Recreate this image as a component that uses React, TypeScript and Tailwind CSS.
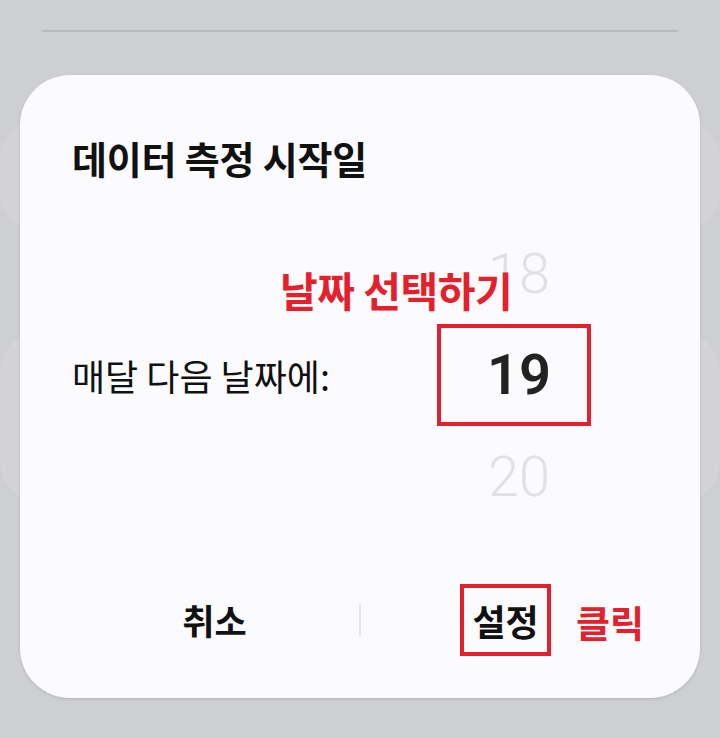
import React, { useState } from 'react';

const DAYS = [18, 19, 20];

export default function App() {
  const [day] = useState(19);

  return (
    <div className="relative h-[738px] w-full overflow-hidden bg-[#cecfd1] font-['Noto_Sans_CJK_KR',sans-serif]">
      {/* dimmed settings page behind the dialog */}
      <div className="mx-[42px] mt-[30px] h-[2px] bg-[#b8b9bb]" />
      <div className="mt-[88px] flex flex-col gap-[100px]">
        <div className="h-[112px] rounded-[40px] bg-[#d3d3d5]" />
        <div className="h-[170px] rounded-[40px] bg-[#d3d3d5]" />
      </div>

      {/* date picker dialog */}
      <div className="absolute left-[20px] top-[75px] flex h-[623px] w-[680px] flex-col rounded-[50px] bg-[#fbfbfd] shadow-[0_1px_3px_rgba(0,0,0,0.12)]">
        <h2 className="pl-[52px] pt-[60px] text-[38px] font-bold leading-[46px] tracking-[-0.2px] text-[#111]">
          데이터 측정 시작일
        </h2>

        <div className="relative mt-[42px] flex items-center justify-between pl-[52px] pr-[109px]">
          <span className="text-[36px] leading-[44px] text-[#111]">매달 다음 날짜에:</span>

          <div className="flex w-[154px] flex-col items-center font-['Roboto',sans-serif]">
            {DAYS.map((d) =>
              d === day ? (
                <div
                  key={d}
                  className="flex h-[102px] w-full items-center justify-center border-4 border-[#e3202b] pl-[10px] text-[56px] font-semibold text-[#222]"
                >
                  {d}
                </div>
              ) : (
                <div
                  key={d}
                  className="flex h-[101px] w-full items-center justify-center pl-[10px] text-[56px] font-light text-[#e1e1e4]"
                >
                  {d}
                </div>
              )
            )}
          </div>

          <span className="absolute left-[260px] top-[42px] text-[41px] font-bold leading-[48px] tracking-[-0.5px] text-[#e3202b]">
            날짜 선택하기
          </span>
        </div>

        <div className="mt-auto mb-[42px] flex items-center px-[50px]">
          <button className="flex-1 text-center text-[35px] font-bold leading-[44px] text-[#111]">취소</button>
          <div className="h-[33px] w-[2px] bg-[#e6e6e8]" />
          <div className="relative flex flex-1 justify-center">
            <button className="border-4 border-[#e3202b] px-[8px] py-[12px] text-[36px] font-bold leading-[40px] text-[#111]">
              설정
            </button>
            <span className="absolute left-[215px] top-[16px] text-[37px] font-bold leading-[44px] text-[#e3202b]">클릭</span>
          </div>
        </div>
      </div>
    </div>
  );
}
